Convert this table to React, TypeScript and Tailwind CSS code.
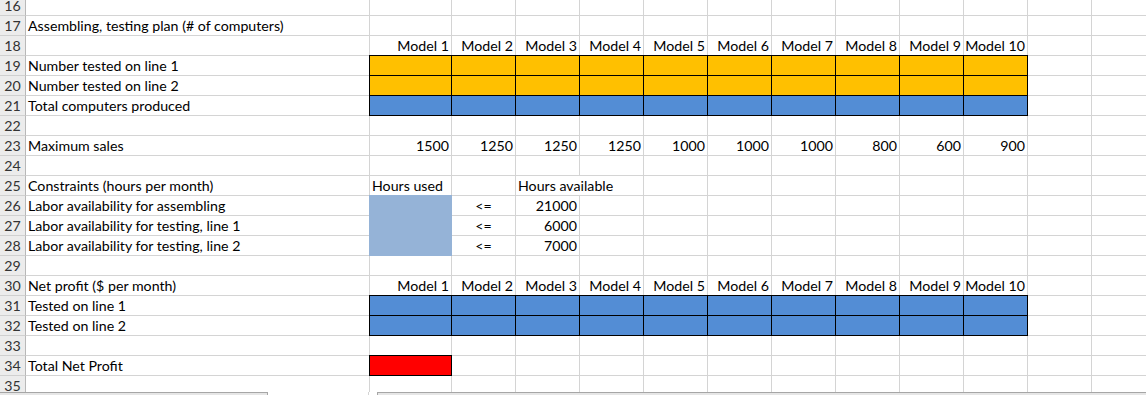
import React from "react";

type Fill = "yellow" | "blue" | "light" | "red";
type Cell = {
  text?: string;
  align?: "left" | "right" | "center";
  fill?: Fill;
  border?: boolean;
  noRight?: boolean;
};

const widthClass = ["w-[344px]", "w-[82px]", "w-[64px]"];

const fillBg: Record<Fill, string> = {
  yellow: "bg-[#ffc000]",
  blue: "bg-[#538dd5]",
  light: "bg-[#95b3d7]",
  red: "bg-[#ff0000]",
};

const models = Array.from({ length: 10 }, (_, i) => `Model ${i + 1}`);
const sales = ["1500", "1250", "1250", "1250", "1000", "1000", "1000", "800", "600", "900"];

function mk(a?: string, rest: Record<number, Cell> = {}): Cell[] {
  const cells: Cell[] = Array.from({ length: 13 }, () => ({}));
  if (a) cells[0] = { text: a, align: "left" };
  Object.entries(rest).forEach(([k, v]) => (cells[Number(k)] = v));
  return cells;
}
function range(from: number, to: number, f: (i: number) => Cell): Record<number, Cell> {
  const r: Record<number, Cell> = {};
  for (let i = from; i <= to; i++) r[i] = f(i - from);
  return r;
}

const rows: { n: number; cells: Cell[] }[] = [
  { n: 16, cells: mk() },
  { n: 17, cells: mk("Assembling, testing plan (# of computers)") },
  { n: 18, cells: mk(undefined, range(1, 10, (i) => ({ text: models[i], align: "right" }))) },
  { n: 19, cells: mk("Number tested on line 1", range(1, 10, () => ({ fill: "yellow", border: true }))) },
  { n: 20, cells: mk("Number tested on line 2", range(1, 10, () => ({ fill: "yellow", border: true }))) },
  { n: 21, cells: mk("Total computers produced", range(1, 10, () => ({ fill: "blue", border: true }))) },
  { n: 22, cells: mk() },
  { n: 23, cells: mk("Maximum sales", range(1, 10, (i) => ({ text: sales[i], align: "right" }))) },
  { n: 24, cells: mk() },
  {
    n: 25,
    cells: mk("Constraints (hours per month)", {
      1: { text: "Hours used", align: "left" },
      3: { text: "Hours available", align: "left", noRight: true },
    }),
  },
  {
    n: 26,
    cells: mk("Labor availability for assembling", {
      1: { fill: "light" },
      2: { text: "<=", align: "center" },
      3: { text: "21000", align: "right" },
    }),
  },
  {
    n: 27,
    cells: mk("Labor availability for testing, line 1", {
      1: { fill: "light" },
      2: { text: "<=", align: "center" },
      3: { text: "6000", align: "right" },
    }),
  },
  {
    n: 28,
    cells: mk("Labor availability for testing, line 2", {
      1: { fill: "light" },
      2: { text: "<=", align: "center" },
      3: { text: "7000", align: "right" },
    }),
  },
  { n: 29, cells: mk() },
  { n: 30, cells: mk("Net profit ($ per month)", range(1, 10, (i) => ({ text: models[i], align: "right" }))) },
  { n: 31, cells: mk("Tested on line 1", range(1, 10, () => ({ fill: "blue", border: true }))) },
  { n: 32, cells: mk("Tested on line 2", range(1, 10, () => ({ fill: "blue", border: true }))) },
  { n: 33, cells: mk() },
  { n: 34, cells: mk("Total Net Profit", { 1: { fill: "red", border: true } }) },
  { n: 35, cells: mk() },
];

const justify = { left: "justify-start", right: "justify-end", center: "justify-center" };

function SheetCell({ cell, col }: { cell: Cell; col: number }) {
  const w = widthClass[Math.min(col, 2)];
  return (
    <div
      className={`relative ${w} shrink-0 h-full border-b border-[#d4d4d4] ${
        cell.noRight ? "" : "border-r"
      } border-r-[#d4d4d4] flex items-end ${justify[cell.align ?? "left"]} px-[2px]`}
    >
      {cell.fill && (
        <div
          className={`absolute -top-px -left-px -right-px -bottom-px ${fillBg[cell.fill]} ${
            cell.border ? "border border-black" : ""
          }`}
        />
      )}
      {cell.text && (
        <span className="relative whitespace-nowrap leading-[19px]">{cell.text}</span>
      )}
    </div>
  );
}

export default function App() {
  return (
    <div className="w-[1146px] h-[395px] overflow-hidden bg-white flex flex-col font-['Lato',sans-serif] text-[14.2px] text-black">
      <div className="flex-1 min-h-0 overflow-hidden">
        <div className="flex flex-col">
          {rows.map((r) => (
            <div key={r.n} className={`flex shrink-0 ${r.n === 16 ? "h-[16px]" : "h-[20px]"}`}>
              <div className="w-[26px] shrink-0 h-full bg-[#ececec] border-r border-r-[#b8b8b8] border-b border-b-[#d0d0d0] flex items-end justify-center text-[#333]">
                <span className="leading-[19px]">{r.n}</span>
              </div>
              {r.cells.map((c, i) => (
                <SheetCell key={i} cell={c} col={i} />
              ))}
            </div>
          ))}
        </div>
      </div>
      <div className="h-[3px] shrink-0 flex">
        <div className="w-[268px] shrink-0 bg-[#e6e6e6] border-t border-r border-[#a6a6a6]" />
        <div className="w-[101px] shrink-0 border-r border-r-[#d4d4d4]" />
        <div className="w-[8px] shrink-0" />
        <div className="flex-1 bg-[#e6e6e6] border-t border-l border-[#a6a6a6]" />
      </div>
    </div>
  );
}
